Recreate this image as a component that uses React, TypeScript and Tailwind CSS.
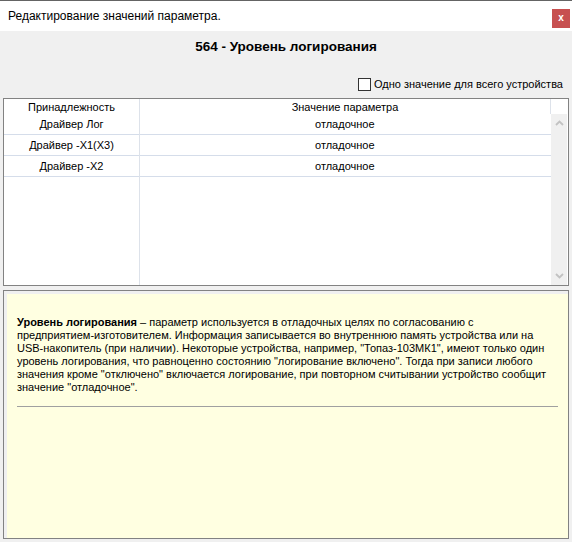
import React from "react";

const rows = [
  { a: "Драйвер Лог", b: "отладочное" },
  { a: "Драйвер -X1(X3)", b: "отладочное" },
  { a: "Драйвер -X2", b: "отладочное" },
];

export default function App() {
  return (
    <div
      className="w-[572px] h-[542px] bg-[#f0f0f0] flex flex-col text-black overflow-hidden"
      style={{ fontFamily: '"Liberation Sans", Arial, sans-serif' }}
    >
      {/* title bar */}
      <div className="h-[31px] bg-white border-t border-[#646464] flex items-center justify-between pl-[8px] pr-[2px]">
        <span className="text-[12px] leading-none">Редактирование значений параметра.</span>
        <div className="w-[18px] h-[19px] mt-[4px] bg-[#c75050] flex items-center justify-center text-white font-bold text-[10px] leading-none">
          x
        </div>
      </div>

      {/* heading */}
      <div className="h-[24px] flex items-end justify-center">
        <span className="font-bold text-[13.5px] leading-[16px]">564 - Уровень логирования</span>
      </div>

      {/* checkbox row */}
      <div className="h-[43px] flex items-center justify-end pr-[9px] pt-[15px]">
        <div className="w-[13px] h-[13px] bg-white border border-[#333333] mr-[3px]" />
        <span className="text-[11px] leading-none">Одно значение для всего устройства</span>
      </div>

      {/* table */}
      <div className="mx-[3px] h-[188px] border border-[#828282] bg-white flex text-[11px] leading-none">
        <div className="w-[136px] border-r border-[#dde2ea] flex flex-col">
          <div className="h-[15px] flex items-center justify-center pt-[2px]">Принадлежность</div>
          {rows.map((r) => (
            <div key={r.a} className="h-[21px] border-b border-[#d5ddea] flex items-center justify-center">
              {r.a}
            </div>
          ))}
        </div>
        <div className="w-[411px] flex flex-col">
          <div className="h-[15px] flex items-center justify-center pt-[2px] border-r border-[#dde2ea]">
            Значение параметра
          </div>
          {rows.map((r) => (
            <div key={r.a} className="h-[21px] border-b border-[#d5ddea] flex items-center pl-[175px]">
              {r.b}
            </div>
          ))}
        </div>
        <div className="flex-1 flex flex-col">
          <div className="h-[15px] bg-white" />
          <div className="flex-1 bg-[#f0f0f0] flex flex-col justify-between items-center py-[6px] mr-[1px]">
            <svg width="9" height="6" viewBox="0 0 9 6">
              <path d="M1 5 L4.5 1.5 L8 5" fill="none" stroke="#c2c2c2" strokeWidth="1.8" />
            </svg>
            <svg width="9" height="6" viewBox="0 0 9 6">
              <path d="M1 1 L4.5 4.5 L8 1" fill="none" stroke="#c2c2c2" strokeWidth="1.8" />
            </svg>
          </div>
        </div>
      </div>

      {/* description */}
      <div className="mx-[3px] mt-[4px] mb-[3px] flex-1 border border-[#828282] flex flex-col">
        <div className="flex-1 border-l-[3px] border-t-[3px] border-[#f0f0f0] bg-[#ffffe1] px-[10px] pt-[22px]">
          <p className="text-[11px] leading-[13px]">
            <b>Уровень логирования</b> – параметр используется в отладочных целях по согласованию с
            <br />
            предприятием-изготовителем. Информация записывается во внутреннюю память устройства или на
            <br />
            USB-накопитель (при наличии). Некоторые устройства, например, "Топаз-103МК1", имеют только один
            <br />
            уровень логирования, что равноценно состоянию "логирование включено". Тогда при записи любого
            <br />
            значения кроме "отключено" включается логирование, при повторном считывании устройство сообщит
            <br />
            значение "отладочное".
          </p>
          <div className="mt-[12px] h-[1px] bg-[#a0a0a0]" />
        </div>
      </div>
    </div>
  );
}
